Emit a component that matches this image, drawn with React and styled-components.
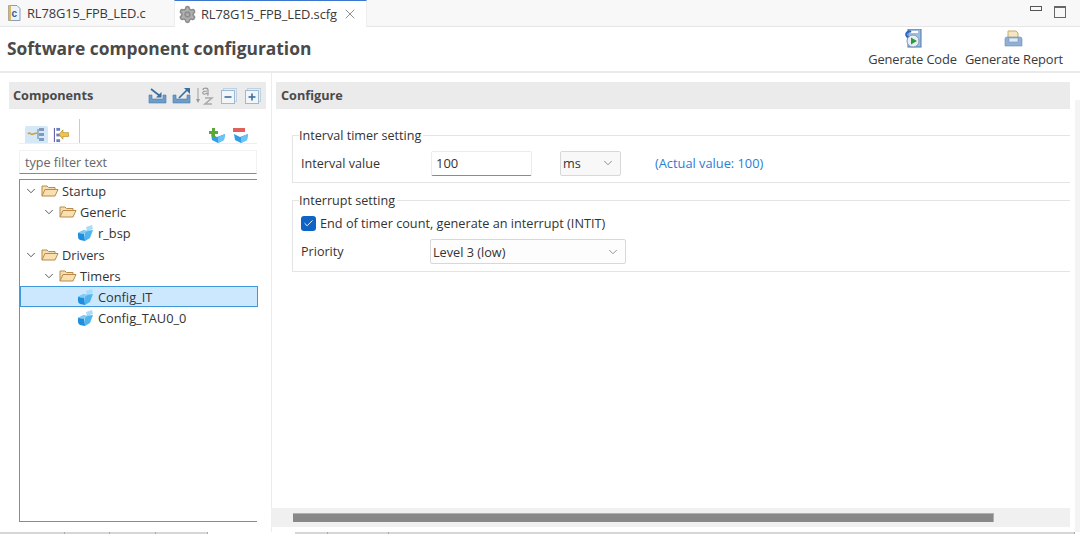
import React from 'react';
import styled, { createGlobalStyle } from 'styled-components';
import { Settings, X, ChevronDown, Check } from 'lucide-react';

const Global = createGlobalStyle`
  html, body { margin: 0; padding: 0; background: #fff; }
  * { box-sizing: border-box; }
`;
const font = `"Open Sans", "Noto Sans", "Liberation Sans", sans-serif`;

const Page = styled.div`
  width: 1080px; height: 534px; overflow: hidden; display: flex; flex-direction: column;
  font-family: ${font}; font-size: 12.7px; color: #333; background: #fff;
`;
const TabBar = styled.div`
  height: 27px; flex: none; display: flex; align-items: stretch; background: #f8f8f8;
  border-bottom: 1px solid #e6e6e6; padding-right: 14px;
`;
const Tab = styled.div`
  display: flex; align-items: center; width: ${p => p.$w}px;
  padding-left: ${p => p.$pl}px; gap: ${p => p.$gap}px; height: ${p => p.$active ? 27 : 26}px;
  background: ${p => p.$active ? '#fff' : 'transparent'};
  border-top: ${p => p.$active ? '1px solid #3d78d0' : '0'};
  border-left: ${p => p.$active ? '1px solid #eee' : '0'};
  border-right: ${p => p.$active ? '1px solid #eee' : '0'};
`;
const TabText = styled.span` font-size: 12.9px; color: #3a3a3a; letter-spacing: -0.1px; white-space: nowrap; `;
const WindowControls = styled.div` margin-left: auto; display: flex; align-items: flex-start; gap: 12px; padding-top: 6px; `;
const MinBox = styled.div` width: 12px; height: 5px; border: 1px solid #555; margin-left: 3px; `;
const MaxBox = styled.div` width: 12px; height: 12px; border: 1px solid #666; border-top-width: 2px; `;
const CloseIcon = styled(X)` margin-left: 1px; color: #666; `;

const Header = styled.div`
  height: 46px; flex: none; display: flex; align-items: flex-start; justify-content: space-between;
  border-bottom: 2px solid #eaeaea; padding: 10px 17px 0 7px;
`;
const Title = styled.h1` margin: 0; font-size: 17.4px; line-height: 22px; font-weight: 700; color: #4a4a4a; `;
const Actions = styled.div` display: flex; gap: 8px; margin-top: -8px; `;
const Action = styled.div` display: flex; flex-direction: column; align-items: center; gap: 2px; `;
const ActionLabel = styled.span` font-size: 12.9px; line-height: 17px; color: #3a3a3a; letter-spacing: -0.13px; white-space: nowrap; `;

const Body = styled.div` flex: 1; display: flex; min-height: 0; `;
const Left = styled.div`
  width: 272px; flex: none; padding: 9px 5px 10px 9px; display: flex; flex-direction: column;
  border-right: 1px solid #ececec; background: #fff;
`;
const SectionHead = styled.div`
  height: 27px; flex: none; display: flex; align-items: center; background: #ebebeb; padding: 0 4px;
  justify-content: space-between;
`;
const SectionTitle = styled.span` font-weight: 700; font-size: 12.7px; color: #4a4a4a; position: relative; top: -1px; `;
const HeadIcons = styled.div` display: flex; align-items: center; padding-right: 1px; `;
const HeadSlot = styled.span` display: flex; margin-left: ${p => p.$ml}px; `;
const ToolRow = styled.div`
  height: 25px; flex: none; margin: 10px 9px 0 10px; display: flex; align-items: flex-end; justify-content: space-between;
  border-bottom: 1px solid #eee; padding: 0 8px 0 6px;
`;
const ToolGroup = styled.div` display: flex; align-items: flex-end; gap: 2px; height: 100%; `;
const ToolSep = styled.div` width: 1px; height: 100%; background: #ccc; margin-left: 4px; `;
const ToolBtn = styled.div`
  width: 23px; height: 17px; display: flex; align-items: center; justify-content: center;
  background: ${p => p.$on ? '#d5e8f8' : 'transparent'}; border-radius: 2px 2px 0 0;
`;
const RightTools = styled.div` display: flex; gap: 5px; align-items: flex-end; `;
const Filter = styled.div`
  height: 24px; flex: none; margin: 6px 9px 0 10px; padding-left: 5px; line-height: 23px;
  border: 1px solid #f2f2f2; border-bottom: 1px solid #8a8a8a; color: #666; font-size: 12.6px;
`;
const Tree = styled.div`
  flex: 1; margin: 5px 9px 0 10px; border: 1px solid #8c8c8c; border-width: 1px 0 1px 1px; background: #fff;
`;
const Row = styled.div`
  height: ${p => p.$h || 21}px; display: flex; align-items: center; padding-left: ${p => p.$pl}px; gap: 3px;
  font-size: 12.8px; color: #333; margin-right: -1px;
  ${p => p.$sel && 'background: #cce8ff; border: 1px solid #3f97dc; padding-left: ' + (p.$pl - 1) + 'px;'}
`;
const Chevron = styled(ChevronDown)` color: #444; flex: none; `;
const Right = styled.div` flex: 1; min-width: 0; display: flex; flex-direction: column; padding: 9px 10px 5px 0; position: relative; `;
const RightHead = styled(SectionHead)` margin-left: 4px; padding-left: 5px; `;
const Content = styled.div` flex: 1; padding: 18px 0 0 20px; overflow: hidden; `;
const Group = styled.fieldset`
  margin: 0 0 ${p => p.$mb}px; padding: 0 0 0 8px; border: 1px solid #e4e4e4; border-right: 0; min-width: 0;
  height: ${p => p.$h}px;
`;
const Legend = styled.legend` padding: 2px 2px 0 0; margin-left: -2px; font-size: 12.6px; line-height: 14px; color: #333; `;
const FieldRow = styled.div` display: flex; align-items: center; height: ${p => p.$h}px; margin-top: ${p => p.$mt || 0}px; `;
const Label = styled.span` width: 130px; flex: none; font-size: 12.6px; color: #333; `;
const TextBox = styled.div`
  width: 101px; height: 25px; line-height: 23px; padding-left: 4px; font-size: 13px; background: #fff;
  border: 1px solid #ececec; border-bottom: 1px solid #8a8a8a; border-radius: 2px; color: #333;
`;
const Select = styled.div`
  width: ${p => p.$w}px; height: 25px; margin-left: ${p => p.$ml || 0}px; display: flex; align-items: center;
  justify-content: space-between; padding: 0 5px 0 2px; font-size: 12.7px; color: #333; flex: none;
  background: ${p => p.$grey ? '#f8f8f8' : '#fdfdfd'}; border: 1px solid #d8d8d8; border-radius: 2px;
`;
const SelChevron = styled(ChevronDown)` color: #666; `;
const Actual = styled.span` margin-left: 34px; color: #2b7cd3; font-size: 12.8px; `;
const CheckBox = styled.div`
  width: 15px; height: 15px; border-radius: 3px; background: #0f63c4; display: flex; align-items: center; justify-content: center; color: #fff; margin-right: 4px;
`;
const Track = styled.div` height: 19px; flex: none; margin-left: -1px; background: #f0f0f0; padding: 5px 0 0 22px; `;
const Thumb = styled.div` width: 701px; height: 9px; background: #888; border: 1px solid #b0b0b0; border-width: 1px 1px 0 0; `;
const Foot = styled.div` height: 2px; flex: none; display: flex; `;
const FootSeg = styled.div`
  height: 2px; width: ${p => p.$w}px; margin-left: ${p => p.$ml || 0}px; flex: none; background: #d6d6d6; border-right: 1px solid #aaa;
`;
const Gutter = styled.div` width: 5px; background: #f4f4f4; position: absolute; right: 0; top: 27px; bottom: 0; `;

const Cube = ({ s = 18 }) => (
  <svg width={s} height={s} viewBox="0 0 18 18">
    <path d="M9 3 L15 1 L16 5 L10 7Z" fill="#a9dcf6" />
    <path d="M1 9 L7 6 L8 17 L3 16 Q1 15 1 13Z" fill="#1c8fe0" />
    <path d="M8 7 L16 6 L13 14 L8 17Z" fill="#4fb5f0" />
    <path d="M1 9 L7 6 L11 7 L6 10Z" fill="#7fcdf5" />
  </svg>
);
const Folder = () => (
  <svg width="18" height="15" viewBox="0 0 18 15">
    <path d="M1 13V3h5l1.500 1.500H14V7" fill="#f6dcae" stroke="#b98b4a" strokeWidth="1" />
    <path d="M1 13 L4 6.500H17L14 13Z" fill="#f8e0b0" stroke="#b98b4a" strokeWidth="1" strokeLinejoin="round" />
  </svg>
);
const CFile = () => (
  <svg width="14" height="16" viewBox="0 0 14 16">
    <path d="M1.500 .5H10L13 3.500V15.500H1.500Z" fill="#eef2f8" stroke="#8b9db5" />
    <path d="M1.500 .5H4V15.500H1.500Z" fill="#d9b866" />
    <text x="4.500" y="12" fontSize="10" fontWeight="700" fill="#2a5fa8" fontFamily="Liberation Sans">c</text>
  </svg>
);
const InIcon = () => (
  <svg width="19" height="17" viewBox="0 0 19 17" fill="none">
    <path d="M1 8v8h17V8h-3v4H4V8Z" fill="#6d9cc9" stroke="#4c7cab" strokeWidth=".6" />
    <path d="M3 2l9 7" stroke="#3b6f9f" strokeWidth="1.700" />
    <path d="M13.500 5v5.500H8Z" fill="#3b6f9f" />
  </svg>
);
const OutIcon = () => (
  <svg width="19" height="17" viewBox="0 0 19 17" fill="none">
    <path d="M1 8v8h17V8h-3v4H4V8Z" fill="#6d9cc9" stroke="#4c7cab" strokeWidth=".6" />
    <path d="M7 11l8-8" stroke="#3b6f9f" strokeWidth="1.700" />
    <path d="M18 1v6l-6-6Z" fill="#3b6f9f" />
  </svg>
);
const SortIcon = () => (
  <svg width="19" height="20" viewBox="0 0 19 20">
    <path d="M3 2v13" stroke="#aaa" strokeWidth="1.200" />
    <path d="M1 13l2 4 2-4Z" fill="#999" />
    <path d="M8 4c0-2.500 5-2.500 5 0v5h-1M12 5c-3 0-5 .5-4 2.500 1 1 3 .5 4-.5" fill="none" stroke="#999" strokeWidth="1.200" />
    <path d="M10 12h7l-7 6h7" fill="none" stroke="#aaa" strokeWidth="1.600" />
  </svg>
);
const TreeBox = ({ plus }) => (
  <svg width="16" height="16" viewBox="0 0 16 16" fill="none">
    <rect x="2.500" y=".5" width="13" height="13" fill="#e6eef5" stroke="#c0d1e0" />
    <rect x=".5" y="2.500" width="13" height="13" fill="#f2f6fa" stroke="#9dbad4" />
    <path d="M3.500 9h7" stroke="#3b6f9f" strokeWidth="1.600" />
    {plus && <path d="M7 5.500v7" stroke="#3b6f9f" strokeWidth="1.600" />}
  </svg>
);
const ViewA = () => (
  <svg width="19" height="15" viewBox="0 0 19 15" fill="none">
    <path d="M1 7c2-3 3 2 5 0l4-1" stroke="#c9a23a" strokeWidth="1.600" />
    <path d="M11 2v10" stroke="#5a7fa8" />
    <rect x="12" y="1" width="5" height="3" fill="#7e9bbd" />
    <rect x="12" y="6" width="5" height="3" fill="#7e9bbd" />
    <rect x="12" y="11" width="5" height="3" fill="#7e9bbd" />
  </svg>
);
const ViewB = () => (
  <svg width="19" height="16" viewBox="0 0 19 17" fill="none">
    <path d="M2 1v15" stroke="#6a62a8" strokeWidth="1.200" />
    <rect x="4" y="1" width="4" height="3" fill="#6a82b8" />
    <rect x="4" y="7" width="4" height="3" fill="#6a82b8" />
    <rect x="4" y="13" width="4" height="3" fill="#6a82b8" />
    <path d="M17 6v4h-6v3L7 8l4-5v3Z" fill="#f3c54d" stroke="#b08a20" strokeWidth=".7" />
  </svg>
);
const AddCube = ({ minus }) => (
  <svg width="18" height="16" viewBox="0 0 18 16">
    <path d="M3 7l6 3 8-3-1 6-6 3-6-3Z" fill="#2f9de8" />
    <path d="M10 10l7-3-1 6-6 3Z" fill="#6cc4f4" />
    {minus
      ? <rect x="2" y="1" width="12" height="4" fill="#e0605c" />
      : <path d="M4 1h3v3h3v3H7v3H4V7H1V4h3Z" fill="#5aa83c" />}
  </svg>
);
const GenCode = () => (
  <svg width="18" height="20" viewBox="0 0 18 20">
    <rect x="4" y="0" width="13" height="18" fill="#9cbde0" stroke="#4f78a8" />
    <rect x="6" y="2" width="8" height="2" fill="#fff" />
    <path d="M7 3a3 3 0 1 0 0 5" fill="none" stroke="#2b66c4" strokeWidth="2" />
    <circle cx="9" cy="12" r="6" fill="#e8f0f6" stroke="#7f9cbc" />
    <path d="M7 8.500l6 3.500-6 3.500Z" fill="#2f9a3a" />
  </svg>
);
const GenReport = () => (
  <svg width="19" height="20" viewBox="0 0 19 18">
    <path d="M4 1h8l2 2v7H4Z" fill="#f4e6c0" stroke="#c8a868" />
    <path d="M1 9q0-2 2-2h13q2 0 2 2v7H1Z" fill="#8fb0d4" stroke="#6d8fb6" strokeWidth=".6" />
    <rect x="5" y="8" width="9" height="4" fill="#dfe9f3" stroke="#6d8fb6" strokeWidth=".5" />
  </svg>
);

const treeRows = [
  { label: 'Startup', level: 0, h: 21 },
  { label: 'Generic', level: 1, h: 21 },
  { label: 'r_bsp', level: 2, h: 22 },
  { label: 'Drivers', level: 0, h: 21 },
  { label: 'Timers', level: 1, h: 21 },
  { label: 'Config_IT', level: 2, h: 21, sel: true },
  { label: 'Config_TAU0_0', level: 2, h: 21 },
];
const indent = [4, 22, 57];

export default function App() {
  return (
    <Page>
      <Global />
      <TabBar>
        <Tab $w={174} $pl={7} $gap={6}><CFile /><TabText>RL78G15_FPB_LED.c</TabText></Tab>
        <Tab $w={193} $active $pl={3} $gap={4}>
          <Settings size={19} color="#8d8d8d" fill="#b0b0b0" />
          <TabText>RL78G15_FPB_LED.scfg</TabText>
          <CloseIcon size={16} strokeWidth={1.1} />
        </Tab>
        <WindowControls><MinBox /><MaxBox /></WindowControls>
      </TabBar>
      <Header>
        <Title>Software component configuration</Title>
        <Actions>
          <Action><GenCode /><ActionLabel>Generate Code</ActionLabel></Action>
          <Action><GenReport /><ActionLabel>Generate Report</ActionLabel></Action>
        </Actions>
      </Header>
      <Body>
        <Left>
          <SectionHead>
            <SectionTitle>Components</SectionTitle>
            <HeadIcons>
              <HeadSlot $ml={0}><InIcon /></HeadSlot>
              <HeadSlot $ml={5}><OutIcon /></HeadSlot>
              <HeadSlot $ml={4}><SortIcon /></HeadSlot>
              <HeadSlot $ml={7}><TreeBox /></HeadSlot>
              <HeadSlot $ml={8}><TreeBox plus /></HeadSlot>
            </HeadIcons>
          </SectionHead>
          <ToolRow>
            <ToolGroup>
              <ToolBtn $on><ViewA /></ToolBtn>
              <ToolBtn><ViewB /></ToolBtn>
              <ToolSep />
            </ToolGroup>
            <RightTools><AddCube /><AddCube minus /></RightTools>
          </ToolRow>
          <Filter>type filter text</Filter>
          <Tree>
            {treeRows.map(r => (
              <Row key={r.label} $pl={indent[r.level]} $h={r.h} $sel={r.sel}>
                {r.level < 2 ? <><Chevron size={14} strokeWidth={1.5} /><Folder /></> : <Cube />}
                <span>{r.label}</span>
              </Row>
            ))}
          </Tree>
        </Left>
        <Right>
          <RightHead><SectionTitle>Configure</SectionTitle></RightHead>
          <Content>
            <Group $h={56} $mb={9}>
              <Legend>Interval timer setting</Legend>
              <FieldRow $h={26} $mt={7}>
                <Label>Interval value</Label>
                <TextBox>100</TextBox>
                <Select $w={61} $ml={28} $grey>ms<SelChevron size={14} strokeWidth={1.2} /></Select>
                <Actual>(Actual value: 100)</Actual>
              </FieldRow>
            </Group>
            <Group $h={80} $mb={0}>
              <Legend>Interrupt setting</Legend>
              <FieldRow $h={18} $mt={6}>
                <CheckBox><Check size={11} strokeWidth={2} /></CheckBox>
                End of timer count, generate an interrupt (INTIT)
              </FieldRow>
              <FieldRow $h={25} $mt={7}>
                <Label>Priority</Label>
                <Select $w={196} $ml={-1}>Level 3 (low)<SelChevron size={14} strokeWidth={1.2} /></Select>
              </FieldRow>
            </Group>
          </Content>
          <Track><Thumb /></Track>
          <Gutter />
        </Right>
      </Body>
      <Foot>
        <FootSeg $w={65} /><FootSeg $w={45} /><FootSeg $w={46} /><FootSeg $w={52} />
        <FootSeg $w={33} $ml={87} /><FootSeg $w={61} /><FootSeg $w={686} />
      </Foot>
    </Page>
  );
}
